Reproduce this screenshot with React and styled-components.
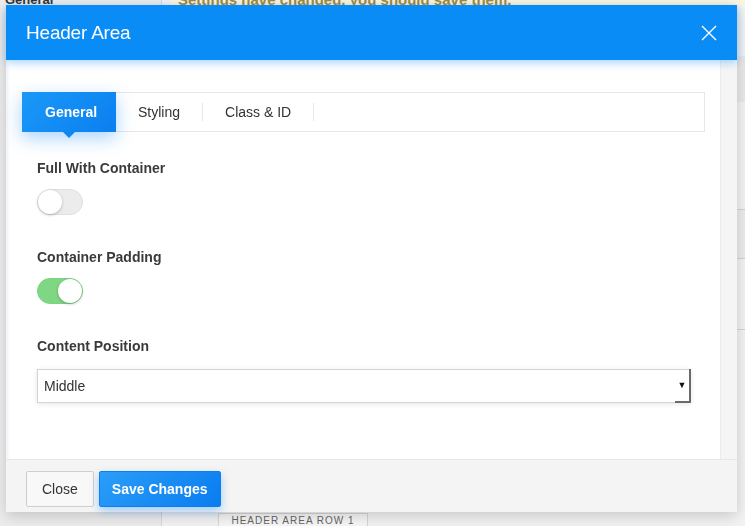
import React, { useState } from "react";
import styled, { createGlobalStyle } from "styled-components";

const GlobalStyle = createGlobalStyle`
  html, body {
    margin: 0;
    padding: 0;
    height: 100%;
    overflow: hidden;
  }
  body {
    font-family: "Liberation Sans", Helvetica, Arial, sans-serif;
    background: #f1f1f1;
    color: #333;
  }
`;

/* background page, mostly hidden behind the modal */
const Page = styled.div`
  display: grid;
  grid-template-columns: 162px 1fr;
  height: 526px;
  overflow: hidden;
`;

const Sidebar = styled.aside`
  border-right: 1px solid #d8d8d8;
  background: #ededed;
`;

const SidebarItem = styled.div`
  height: 5px;
  overflow: hidden;
  padding-left: 5px;
  font-size: 13px;
  font-weight: bold;
  color: #333;
  line-height: 0;
`;

const MainArea = styled.main`
  display: flex;
  flex-direction: column;
  background: #f3f3f3;
`;

const Notice = styled.div`
  height: 5px;
  overflow: hidden;
  margin-left: 8px;
  padding-left: 8px;
  background: #fcf6e0;
  color: #a4893a;
  font-size: 15px;
  font-weight: bold;
  line-height: 0;
`;

const RightRows = styled.div`
  flex: 1;
  display: flex;
  flex-direction: column;
  align-items: flex-end;
`;

const RightRow = styled.div`
  width: 20px;
  height: ${({ h }) => h}px;
  background: ${({ bg }) => bg};
  border-bottom: 1px solid ${({ line }) => (line ? "#d2d2d2" : "transparent")};
`;

const RowButton = styled.div`
  margin-left: 56px;
  width: 150px;
  height: 13px;
  overflow: hidden;
  border: 1px solid #d6d6d6;
  border-bottom: none;
  background: #f7f7f7;
  color: #666;
  font-size: 10px;
  letter-spacing: 1px;
  text-align: center;
  line-height: 14px;
  box-sizing: border-box;
`;

/* modal */
const Modal = styled.div`
  position: fixed;
  left: 6px;
  top: 5px;
  width: 731px;
  height: 507px;
  display: flex;
  flex-direction: column;
  background: #fff;
  box-shadow: 0 4px 14px rgba(0, 0, 0, 0.18);
`;

const Header = styled.header`
  height: 55px;
  flex-shrink: 0;
  display: flex;
  align-items: center;
  justify-content: space-between;
  padding: 0 20px;
  background: #0a8cf7;
  color: #fff;
  box-shadow: 0 3px 8px rgba(10, 140, 247, 0.35);
  position: relative;
  z-index: 2;
`;

const Title = styled.h2`
  margin: 0;
  font-size: 19px;
  font-weight: normal;
  letter-spacing: -0.2px;
`;

const CloseIcon = styled.button`
  border: none;
  background: none;
  padding: 0;
  width: 16px;
  height: 16px;
  cursor: pointer;
  display: flex;
`;

const Body = styled.div`
  flex: 1;
  display: flex;
  min-height: 0;
`;

const Content = styled.div`
  flex: 1;
  padding: 32px 15px 0 16px;
  background: linear-gradient(to right, #eef2f8 0, #fff 4px);
`;

const ScrollTrack = styled.div`
  width: 17px;
  background: #f5f5f5;
  border-left: 1px solid #ececec;
  box-sizing: border-box;
`;

const Tabs = styled.nav`
  display: flex;
  height: 40px;
  border: 1px solid #e6e6e6;
  box-sizing: border-box;
`;

const Tab = styled.button`
  position: relative;
  border: none;
  margin: -1px 0 -1px -1px;
  padding: 0 23px;
  font-family: inherit;
  font-size: 14px;
  cursor: pointer;
  background: ${({ active }) =>
    active ? "linear-gradient(135deg, #1b98f7, #0a7ff0)" : "transparent"};
  color: ${({ active }) => (active ? "#fff" : "#333")};
  font-weight: ${({ active }) => (active ? "bold" : "normal")};
  width: ${({ active }) => (active ? "94px" : "auto")};
  box-shadow: ${({ active }) =>
    active ? "0 6px 18px rgba(10, 130, 245, 0.35)" : "none"};

  &::before {
    content: "";
    display: ${({ active }) => (active ? "block" : "none")};
    position: absolute;
    left: 50%;
    bottom: -6px;
    margin-left: -6px;
    border-left: 6px solid transparent;
    border-right: 6px solid transparent;
    border-top: 6px solid #0c86f2;
  }

  &::after {
    content: "";
    display: ${({ active }) => (active ? "none" : "block")};
    position: absolute;
    right: 0;
    top: 11px;
    bottom: 11px;
    width: 1px;
    background: #e6e6e6;
  }
`;

const Fields = styled.div`
  padding: 26px 14px 0 15px;
`;

const Field = styled.div`
  margin-bottom: 29px;
`;

const Label = styled.div`
  font-size: 14px;
  font-weight: bold;
  line-height: 20px;
  color: #3a3a3a;
  margin-bottom: ${({ gap }) => gap}px;
`;

const Toggle = styled.button`
  position: relative;
  width: 46px;
  height: 26px;
  padding: 0;
  border-radius: 13px;
  cursor: pointer;
  border: 1px solid ${({ on }) => (on ? "#7bd47f" : "#e0e0e0")};
  background: ${({ on }) => (on ? "#7fd683" : "#ececec")};
  box-sizing: border-box;

  &::after {
    content: "";
    position: absolute;
    top: 0;
    left: ${({ on }) => (on ? "20px" : "0")};
    width: 24px;
    height: 24px;
    border-radius: 50%;
    background: #fff;
    box-shadow: 0 1px 3px rgba(0, 0, 0, 0.25);
  }
`;

const Select = styled.div`
  display: flex;
  align-items: stretch;
  height: 34px;
  border: 1px solid #d4d4d4;
  box-shadow: 0 1px 5px rgba(0, 0, 0, 0.1);
  box-sizing: border-box;
  font-size: 14px;
  color: #333;
`;

const SelectValue = styled.div`
  flex: 1;
  display: flex;
  align-items: center;
  padding-left: 6px;
`;

const SelectArrow = styled.div`
  width: 14px;
  display: flex;
  align-items: center;
  justify-content: center;
  border-right: 2px solid #6a6a6a;
  border-bottom: 2px solid #6a6a6a;
  margin: -1px -1px -1px 0;
  font-size: 9px;
  color: #111;
`;

const Footer = styled.footer`
  height: 53px;
  flex-shrink: 0;
  display: flex;
  align-items: flex-start;
  gap: 5px;
  padding: 11px 20px 0;
  box-sizing: border-box;
  background: #f4f4f4;
  border-top: 1px solid #e8e8e8;
`;

const Button = styled.button`
  height: 36px;
  padding: 0 ${({ primary }) => (primary ? "12px" : "15px")};
  font-family: inherit;
  font-size: 14px;
  cursor: pointer;
  border-radius: 2px;
  border: 1px solid ${({ primary }) => (primary ? "#0a80f0" : "#cfcfcf")};
  background: ${({ primary }) =>
    primary ? "linear-gradient(135deg, #2a9ef8, #0a7cf0)" : "#f8f8f8"};
  color: ${({ primary }) => (primary ? "#fff" : "#333")};
  font-weight: ${({ primary }) => (primary ? "bold" : "normal")};
  box-shadow: ${({ primary }) =>
    primary ? "0 4px 10px rgba(10, 130, 245, 0.35)" : "none"};
`;

export default function App() {
  const [tab, setTab] = useState("General");
  const [fullWidth, setFullWidth] = useState(false);
  const [padding, setPadding] = useState(true);

  return (
    <>
      <GlobalStyle />
      <Page>
        <Sidebar>
          <SidebarItem>General</SidebarItem>
        </Sidebar>
        <MainArea>
          <Notice>Settings have changed, you should save them.</Notice>
          <RightRows>
            <RightRow h={50} bg="#f3f3f3" />
            <RightRow h={45} bg="#e9e9e9" />
            <RightRow h={107} bg="#f3f3f3" line />
            <RightRow h={48} bg="#ececec" line />
            <RightRow h={70} bg="#f3f3f3" line />
          </RightRows>
          <RowButton>HEADER AREA ROW 1</RowButton>
        </MainArea>
      </Page>

      <Modal>
        <Header>
          <Title>Header Area</Title>
          <CloseIcon aria-label="Close">
            <svg width="16" height="16" viewBox="0 0 16 16">
              <path
                d="M1 1 L15 15 M15 1 L1 15"
                stroke="#fff"
                strokeWidth="1.4"
                fill="none"
              />
            </svg>
          </CloseIcon>
        </Header>
        <Body>
          <Content>
            <Tabs>
              {["General", "Styling", "Class & ID"].map((t) => (
                <Tab key={t} active={tab === t} onClick={() => setTab(t)}>
                  {t}
                </Tab>
              ))}
            </Tabs>
            <Fields>
              <Field>
                <Label gap={11}>Full With Container</Label>
                <Toggle on={fullWidth} onClick={() => setFullWidth(!fullWidth)} />
              </Field>
              <Field>
                <Label gap={11}>Container Padding</Label>
                <Toggle on={padding} onClick={() => setPadding(!padding)} />
              </Field>
              <Field>
                <Label gap={13}>Content Position</Label>
                <Select>
                  <SelectValue>Middle</SelectValue>
                  <SelectArrow>▼</SelectArrow>
                </Select>
              </Field>
            </Fields>
          </Content>
          <ScrollTrack />
        </Body>
        <Footer>
          <Button>Close</Button>
          <Button primary>Save Changes</Button>
        </Footer>
      </Modal>
    </>
  );
}
